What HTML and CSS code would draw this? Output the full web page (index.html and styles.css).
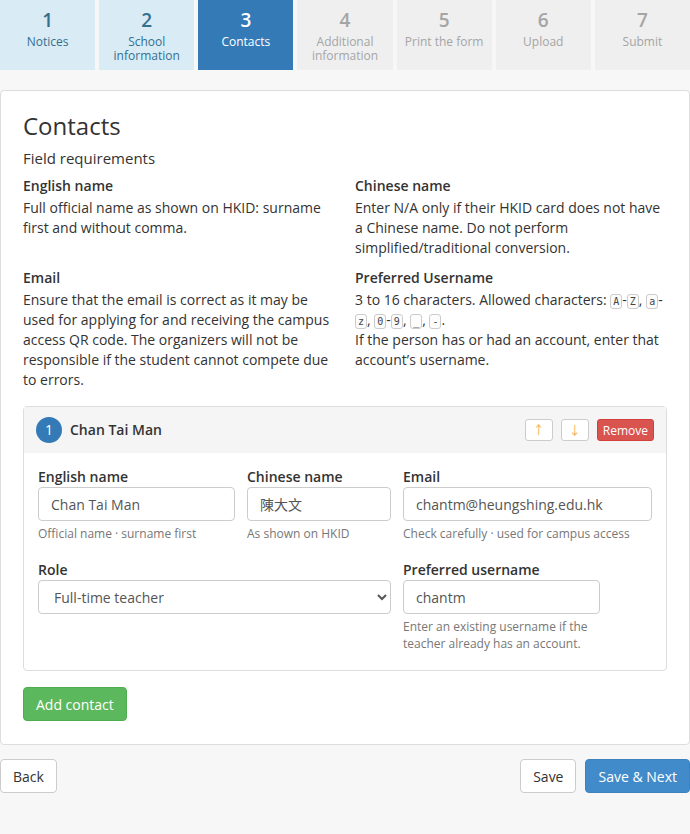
FILE: index.html
```html
<!DOCTYPE html>
<html lang="en">
<head>
    <meta charset="UTF-8">
    <meta name="viewport" content="width=device-width, initial-scale=1.0">
    <title>Registration - Contacts</title>
    <link rel="stylesheet" href="styles.css">
</head>
<body>
    <div class="steps">
        <div class="step done"><span class="num">1</span><span class="label">Notices</span></div>
        <div class="step done"><span class="num">2</span><span class="label">School information</span></div>
        <div class="step active"><span class="num">3</span><span class="label">Contacts</span></div>
        <div class="step"><span class="num">4</span><span class="label">Additional information</span></div>
        <div class="step"><span class="num">5</span><span class="label">Print the form</span></div>
        <div class="step"><span class="num">6</span><span class="label">Upload</span></div>
        <div class="step"><span class="num">7</span><span class="label">Submit</span></div>
    </div>

    <div class="panel">
        <h2>Contacts</h2>
        <p class="subtitle">Field requirements</p>
        <div class="rules">
            <div>
                <h4>English name</h4>
                <p>Full official name as shown on HKID: surname first and without comma.</p>
            </div>
            <div>
                <h4>Chinese name</h4>
                <p>Enter N/A only if their HKID card does not have a Chinese name. Do not perform simplified/traditional conversion.</p>
            </div>
            <div>
                <h4>Email</h4>
                <p>Ensure that the email is correct as it may be used for applying for and receiving the campus access QR code. The organizers will not be responsible if the student cannot compete due to errors.</p>
            </div>
            <div>
                <h4>Preferred Username</h4>
                <p>3 to 16 characters. Allowed characters: <kbd>A</kbd>-<kbd>Z</kbd>, <kbd>a</kbd>-<kbd>z</kbd>, <kbd>0</kbd>-<kbd>9</kbd>, <kbd>_</kbd>, <kbd>-</kbd>.<br>If the person has or had an account, enter that account’s username.</p>
            </div>
        </div>

        <div class="contact">
            <div class="contact-head">
                <span class="badge">1</span>
                <span class="contact-name">Chan Tai Man</span>
                <div class="tools">
                    <button class="btn-sm">&#8593;</button>
                    <button class="btn-sm">&#8595;</button>
                    <button class="btn-sm danger">Remove</button>
                </div>
            </div>
            <div class="contact-body">
                <div class="field">
                    <label>English name</label>
                    <input type="text" value="Chan Tai Man">
                    <small>Official name · surname first</small>
                </div>
                <div class="field">
                    <label>Chinese name</label>
                    <input type="text" value="陳大文">
                    <small>As shown on HKID</small>
                </div>
                <div class="field">
                    <label>Email</label>
                    <input type="text" value="chantm@heungshing.edu.hk">
                    <small>Check carefully · used for campus access</small>
                </div>
                <div class="field role">
                    <label>Role</label>
                    <select>
                        <option>Full-time teacher</option>
                        <option>Part-time teacher</option>
                    </select>
                </div>
                <div class="field username">
                    <label>Preferred username</label>
                    <input type="text" value="chantm">
                    <small>Enter an existing username if the teacher already has an account.</small>
                </div>
            </div>
        </div>

        <button class="btn green">Add contact</button>
    </div>

    <div class="footer">
        <button class="btn">Back</button>
        <div class="footer-right">
            <button class="btn">Save</button>
            <button class="btn blue">Save &amp; Next</button>
        </div>
    </div>
</body>
</html>
```

FILE: styles.css
```css
body {
    margin: 0;
    background-color: #f7f7f7;
    color: #333;
    font-family: "Open Sans", "Noto Sans CJK TC", sans-serif;
    font-size: 14px;
    line-height: 20px;
}

/* step bar */
.steps {
    display: flex;
    gap: 4px;
}
.step {
    flex: 1;
    height: 70px;
    box-sizing: border-box;
    padding-top: 9px;
    background-color: #efefef;
    color: #a5a5a5;
    text-align: center;
    display: flex;
    flex-direction: column;
    align-items: center;
}
.step .num {
    font-size: 19px;
    font-weight: 600;
    line-height: 22px;
}
.step .label {
    font-size: 12px;
    line-height: 14px;
    margin-top: 4px;
}
.step.done {
    background-color: #d9ebf5;
    color: #33708f;
}
.step.active {
    background-color: #337ab7;
    color: white;
}

/* main panel */
.panel {
    margin-top: 20px;
    background-color: white;
    border: 1px solid #ddd;
    border-radius: 4px;
    padding: 22px 22px 23px;
}
.panel h2 {
    margin: 0;
    font-size: 24px;
    font-weight: 400;
    line-height: 26px;
}
.subtitle {
    margin: 9px 0 8px;
    font-size: 15px;
    line-height: 20px;
}
.rules {
    display: grid;
    grid-template-columns: 1fr 1fr;
    column-gap: 20px;
    row-gap: 10px;
}
.rules h4 {
    margin: 0 0 2px;
    font-size: 14px;
    font-weight: 600;
}
.rules p {
    margin: 0;
}
kbd {
    font-family: "DejaVu Sans Mono", monospace;
    font-size: 10px;
    line-height: 14px;
    padding: 1px 2px;
    border: 1px solid #ccc;
    border-radius: 3px;
    background-color: #fcfcfc;
    color: #444;
}

/* contact card */
.contact {
    margin-top: 16px;
    border: 1px solid #ddd;
    border-radius: 4px;
}
.contact-head {
    background-color: #f5f5f5;
    padding: 10px 12px 10px;
    display: flex;
    align-items: center;
}
.badge {
    width: 26px;
    height: 26px;
    border-radius: 50%;
    background-color: #337ab7;
    color: white;
    font-size: 14px;
    line-height: 26px;
    text-align: center;
}
.contact-name {
    margin-left: 8px;
    font-size: 14px;
    font-weight: 600;
}
.tools {
    margin-left: auto;
    display: flex;
    gap: 8px;
}
.btn-sm {
    height: 22px;
    min-width: 28px;
    padding: 0 5px;
    border: 1px solid #ccc;
    border-radius: 3px;
    background-color: white;
    color: #f0ad4e;
    font-family: inherit;
    font-size: 12px;
    cursor: pointer;
}
.btn-sm.danger {
    background-color: #d9534f;
    border-color: #d43f3a;
    color: white;
}
.contact-body {
    padding: 14px 14px 18px;
    display: grid;
    grid-template-columns: 197px 144px 249px;
    column-gap: 12px;
    row-gap: 18px;
}
.field {
    display: flex;
    flex-direction: column;
}
.field label {
    font-weight: 600;
}
.field input,
.field select {
    height: 34px;
    box-sizing: border-box;
    border: 1px solid #ccc;
    border-radius: 4px;
    padding: 6px 12px;
    font-family: inherit;
    font-size: 14px;
    color: #555;
    background-color: white;
}
.field select {
    padding-left: 11px;
}
.field small {
    margin-top: 4px;
    font-size: 12px;
    line-height: 17px;
    color: #777;
}
.field.role {
    grid-column: 1 / 3;
}
.field.username {
    width: 197px;
}

/* buttons */
.btn {
    height: 34px;
    padding: 0 12px;
    border: 1px solid #ccc;
    border-radius: 4px;
    background-color: white;
    color: #333;
    font-family: inherit;
    font-size: 14px;
    cursor: pointer;
}
.btn.green {
    margin-top: 16px;
    background-color: #5cb85c;
    border-color: #4cae4c;
    color: white;
}
.btn.blue {
    background-color: #428bca;
    border-color: #3b82c0;
    color: white;
}
.footer {
    margin-top: 14px;
    display: flex;
    justify-content: space-between;
}
.footer-right {
    display: flex;
    gap: 9px;
}
```
